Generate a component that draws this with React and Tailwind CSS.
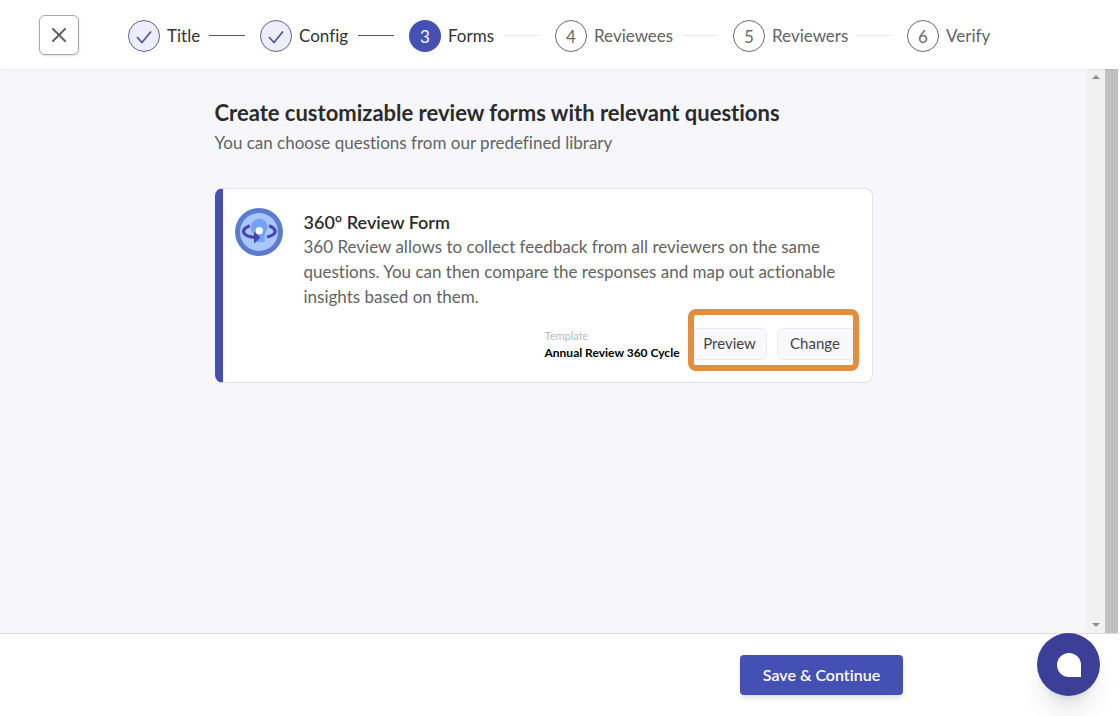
import { Fragment } from "react";

// Icons
import { X } from "lucide-react";

const steps = [
  { label: "Title", status: "done" },
  { label: "Config", status: "done" },
  { label: "Forms", status: "active" },
  { label: "Reviewees", status: "todo" },
  { label: "Reviewers", status: "todo" },
  { label: "Verify", status: "todo" },
];

const circleStyles = {
  done: "border border-[#5f609f] bg-[#ededfb] text-[#4b4e9c]",
  active: "bg-[#4550b5] text-white",
  todo: "border border-[#6b6b6b] text-[#6b6b6b]",
};

function CheckMark() {
  return (
    <svg viewBox="0 0 16 14" className="h-3.5 w-4" aria-hidden="true">
      <path d="M1 7L6 12.500L15 1.500" fill="none" stroke="currentColor" strokeWidth="1.600" />
    </svg>
  );
}

/** Numbered steps with connecting lines */
function Stepper() {
  return (
    <ol className="grid grid-cols-[132px_149px_146px_178px_174px_auto] text-[17px] leading-6">
      {steps.map((step, i) => (
        <li key={step.label} className="flex items-center">
          <span
            className={`mr-[7px] flex size-8 shrink-0 items-center justify-center rounded-full pt-0.5 ${circleStyles[step.status]}`}
          >
            {step.status === "done" ? <CheckMark /> : i + 1}
          </span>
          <span className={step.status === "todo" ? "text-[#636363]" : "text-[#333333]"}>
            {step.label}
          </span>
          {i < steps.length - 1 && (
            <span
              className={`mr-[15px] ml-auto h-px w-9 ${step.status === "done" ? "bg-[#555555]" : "bg-[#eaeaea]"}`}
            />
          )}
        </li>
      ))}
    </ol>
  );
}

/** Round 360 degree badge */
function ReviewIcon() {
  return (
    <svg viewBox="0 0 48 48" className="size-12 shrink-0" aria-hidden="true">
      <circle cx="24" cy="24" r="24" fill="#5a7bce" />
      <circle cx="24" cy="24" r="19" fill="#a9c6ff" />
      <path d="M17 24L16 20A8.300 8.300 0 1 1 31.500 23L29.700 26V34H21L20 28Z" fill="#73a3f6" />
      <path
        d="M14.800 17.800C5.500 21.500 6 28 20 29.300M34.200 17.800C42.500 21.500 42.500 26.500 32 29"
        fill="none"
        stroke="#4745ae"
        strokeWidth="3.200"
      />
      <path d="M19 23.800L25.500 29.500L19 35.500Z" fill="#4745ae" />
      <circle cx="24.300" cy="22.700" r="3.600" fill="#ffffff" />
    </svg>
  );
}

/** Scroll track with its two arrows */
function ScrollTrack() {
  return (
    <Fragment>
      <div className="flex w-[18px] shrink-0 flex-col items-center justify-between bg-[#f1f1f1] py-1.5">
        <svg viewBox="0 0 8 4" className="h-1 w-2" aria-hidden="true">
          <path d="M0 4L4 0L8 4Z" fill="#8f8f8f" />
        </svg>
        <svg viewBox="0 0 8 4" className="h-1 w-2" aria-hidden="true">
          <path d="M0 0L4 4L8 0Z" fill="#8f8f8f" />
        </svg>
      </div>
      <div className="mr-0.5 w-[13px] shrink-0 bg-[#c1c1c1]" />
    </Fragment>
  );
}

function ReviewFormCard() {
  return (
    <section className="mt-[33px] rounded-lg border border-l-8 border-[#e0e0e8] border-l-[#4550b5] bg-white pt-[19px] pr-[13px] pb-[11px] pl-3">
      <div className="flex gap-[21px]">
        <ReviewIcon />
        <div className="pt-0.5">
          <h2 className="text-lg leading-6 font-semibold text-[#2b2b2b]">360° Review Form</h2>
          <p className="text-[17px] leading-[25px] text-[#636363]">
            360 Review allows to collect feedback from all reviewers on the same questions. You can
            then compare the responses and map out actionable insights based on them.
          </p>
        </div>
      </div>

      {/* Template row */}
      <div className="flex items-center justify-end gap-1">
        <div className="min-w-[139px] pt-2.5">
          <p className="text-[11px] leading-4 text-[#b9b9c3]">Template</p>
          <p className="text-xs leading-[18px] font-bold text-black">Annual Review 360 Cycle</p>
        </div>
        <div className="flex h-[62px] w-[171px] items-center justify-between rounded-lg border-[6px] border-[#e38d3f] pt-2">
          <button
            type="button"
            className="h-8 w-[73px] rounded-r-md border border-l-0 border-[#e9e9f2] bg-[#f9f9fd] pb-0.5 text-[15px] text-[#444444]"
          >
            Preview
          </button>
          <button
            type="button"
            className="h-8 w-[76px] rounded-l-md border border-r-0 border-[#e9e9f2] bg-[#f9f9fd] pb-0.5 text-[15px] text-[#444444]"
          >
            Change
          </button>
        </div>
      </div>
    </section>
  );
}

export default function App() {
  return (
    <div className="flex h-screen flex-col bg-white font-[Lato,sans-serif] [font-variant-ligatures:none]">
      {/* Header */}
      <header className="z-10 flex h-[69px] shrink-0 items-center gap-[49px] bg-white px-[39px] pt-0.5 shadow-xs">
        <button
          type="button"
          aria-label="Close"
          className="mb-0.5 flex size-10 shrink-0 items-center justify-center rounded-md border border-[#a8a8a8] bg-white text-[#606060] shadow"
        >
          <X size={24} strokeWidth={2} className="shrink-0" />
        </button>
        <Stepper />
      </header>

      {/* Content */}
      <div className="flex min-h-0 flex-1">
        <main className="flex-1 bg-[#f6f6fb] px-6 pt-7">
          <div className="mx-auto max-w-[658px]">
            <h1 className="text-[22px] leading-8 font-bold text-[#2b2b2b]">
              Create customizable review forms with relevant questions
            </h1>
            <p className="mt-0.5 text-[17px] leading-6 text-[#636363]">
              You can choose questions from our predefined library
            </p>
            <ReviewFormCard />
          </div>
        </main>
        <ScrollTrack />
      </div>

      {/* Footer */}
      <footer className="flex h-[83px] shrink-0 items-center justify-end border-t border-[#dcdce2] bg-white pr-[217px]">
        <button
          type="button"
          className="h-10 w-[163px] rounded bg-[#4550b5] text-base font-semibold text-white shadow-md"
        >
          Save &amp; Continue
        </button>
      </footer>

      {/* Chat launcher */}
      <button
        type="button"
        aria-label="Open chat"
        className="fixed right-5 bottom-5 z-20 flex size-[63px] items-center justify-center rounded-full bg-[#3b3f98] shadow-xl"
      >
        <span className="size-6 rounded-full rounded-br-none bg-white" />
      </button>
    </div>
  );
}
